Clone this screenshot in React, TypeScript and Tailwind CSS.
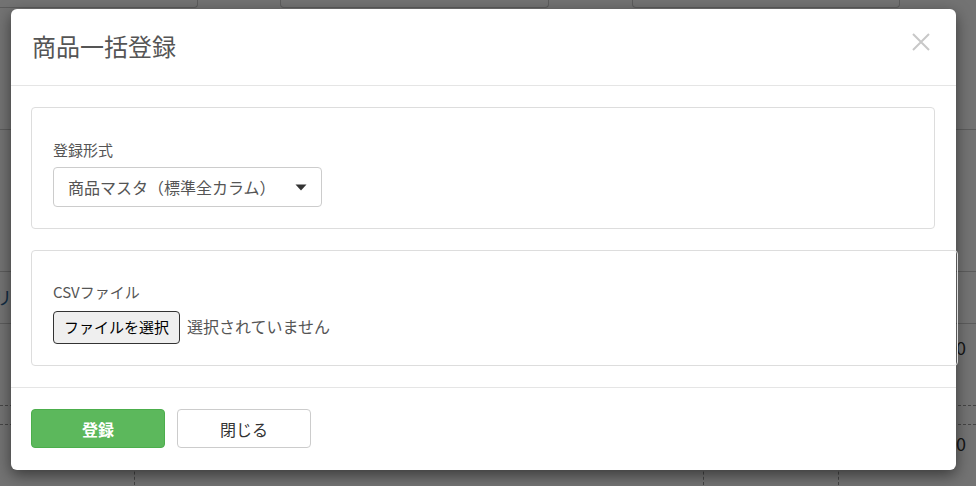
const font = { fontFamily: '"Noto Sans CJK JP", "Noto Sans", sans-serif' };

function BackgroundPage() {
  return (
    <div className="w-full h-full bg-white text-[#333]">
      <div className="flex h-[8px]">
        <div className="w-[198px] border-b border-r border-[#ccc] rounded-br-[4px]" />
        <div className="ml-[82px] w-[269px] border-b border-x border-[#ccc] rounded-b-[4px]" />
        <div className="ml-[83px] w-[268px] border-b border-x border-[#ccc] rounded-b-[4px]" />
      </div>
      <div className="h-[122px] border-b border-[#ccc]" />
      <div className="h-[142px] border-b border-[#ccc]" />
      <div className="h-[52px] border-b border-[#ccc] flex items-center justify-between">
        <span className="text-[#2a6496] text-[18px] -ml-[6px]">リ</span>
      </div>
      <div className="h-[82px] border-b border-dashed border-[#999] flex items-start justify-end pt-[10px] pr-[10px]">
        <span className="text-[18px]">0</span>
      </div>
      <div className="h-[19px] border-b border-dashed border-[#999]" />
      <div className="flex h-[60px]">
        <div className="w-[135px] border-r border-dashed border-[#999]" />
        <div className="w-[569px] border-r border-dashed border-[#999]" />
        <div className="w-[135px] border-r border-dashed border-[#999]" />
        <div className="flex-1 flex justify-end pt-[5px] pr-[10px]">
          <span className="text-[18px]">0</span>
        </div>
      </div>
    </div>
  );
}

export default function App() {
  return (
    <div className="relative w-[976px] h-[486px] overflow-hidden" style={font}>
      <BackgroundPage />
      <div className="absolute inset-0 bg-black/55" />
      <div className="absolute left-[11px] top-[9px] w-[945px] h-[461px] bg-white rounded-[6px] shadow-[0_5px_15px_rgba(0,0,0,0.5)] flex flex-col">
        <div className="h-[77px] border-b border-[#e5e5e5] flex items-center justify-between pl-[21px] pr-[24px]">
          <h1 className="text-[24px] text-[#555] leading-none pb-[2px]">商品一括登録</h1>
          <button className="w-[22px] h-[22px] flex items-center justify-center -mt-[10px]" aria-label="close">
            <svg width="20" height="20" viewBox="0 0 20 20" stroke="#c8c8c8" strokeWidth="2" fill="none">
              <path d="M2 2L18 18M18 2L2 18" />
            </svg>
          </button>
        </div>

        <div className="px-[20px] pt-[21px] pb-[21px] flex flex-col gap-[21px] border-b border-[#e5e5e5]">
          <div className="w-[904px] border border-[#ddd] rounded-[4px] pt-[31px] pb-[21px] px-[21px]">
            <div className="text-[15px] text-[#555] leading-[22px] mb-[6px]">登録形式</div>
            <div className="w-[269px] h-[40px] border border-[#ccc] rounded-[4px] flex items-center justify-between pl-[14px] pr-[14px]">
              <span className="text-[16px] text-[#555]">商品マスタ（標準全カラム）</span>
              <svg width="12" height="7" viewBox="0 0 12 7" className="mt-[1px]">
                <path d="M0.5 0.5H11.5L6 6.5Z" fill="#333" />
              </svg>
            </div>
          </div>

          <div className="w-[927px] border border-[#ddd] rounded-[4px] pt-[30px] pb-[21px] px-[21px]">
            <div className="text-[15px] text-[#555] leading-[22px] mb-[8px]">CSVファイル</div>
            <div className="flex items-center gap-[7px]">
              <button className="w-[127px] h-[33px] bg-[#efefef] border border-[#333] rounded-[4px] text-[15px] text-black">
                ファイルを選択
              </button>
              <span className="text-[16px] text-[#555] -mt-[3px]">選択されていません</span>
            </div>
          </div>
        </div>

        <div className="flex gap-[12px] px-[20px] pt-[21px]">
          <button className="w-[134px] h-[39px] bg-[#5cb85c] border border-[#4cae4c] rounded-[4px] text-white font-bold text-[16px]">
            登録
          </button>
          <button className="w-[134px] h-[39px] bg-white border border-[#ccc] rounded-[4px] text-[#333] text-[16px]">
            閉じる
          </button>
        </div>
      </div>
    </div>
  );
}
